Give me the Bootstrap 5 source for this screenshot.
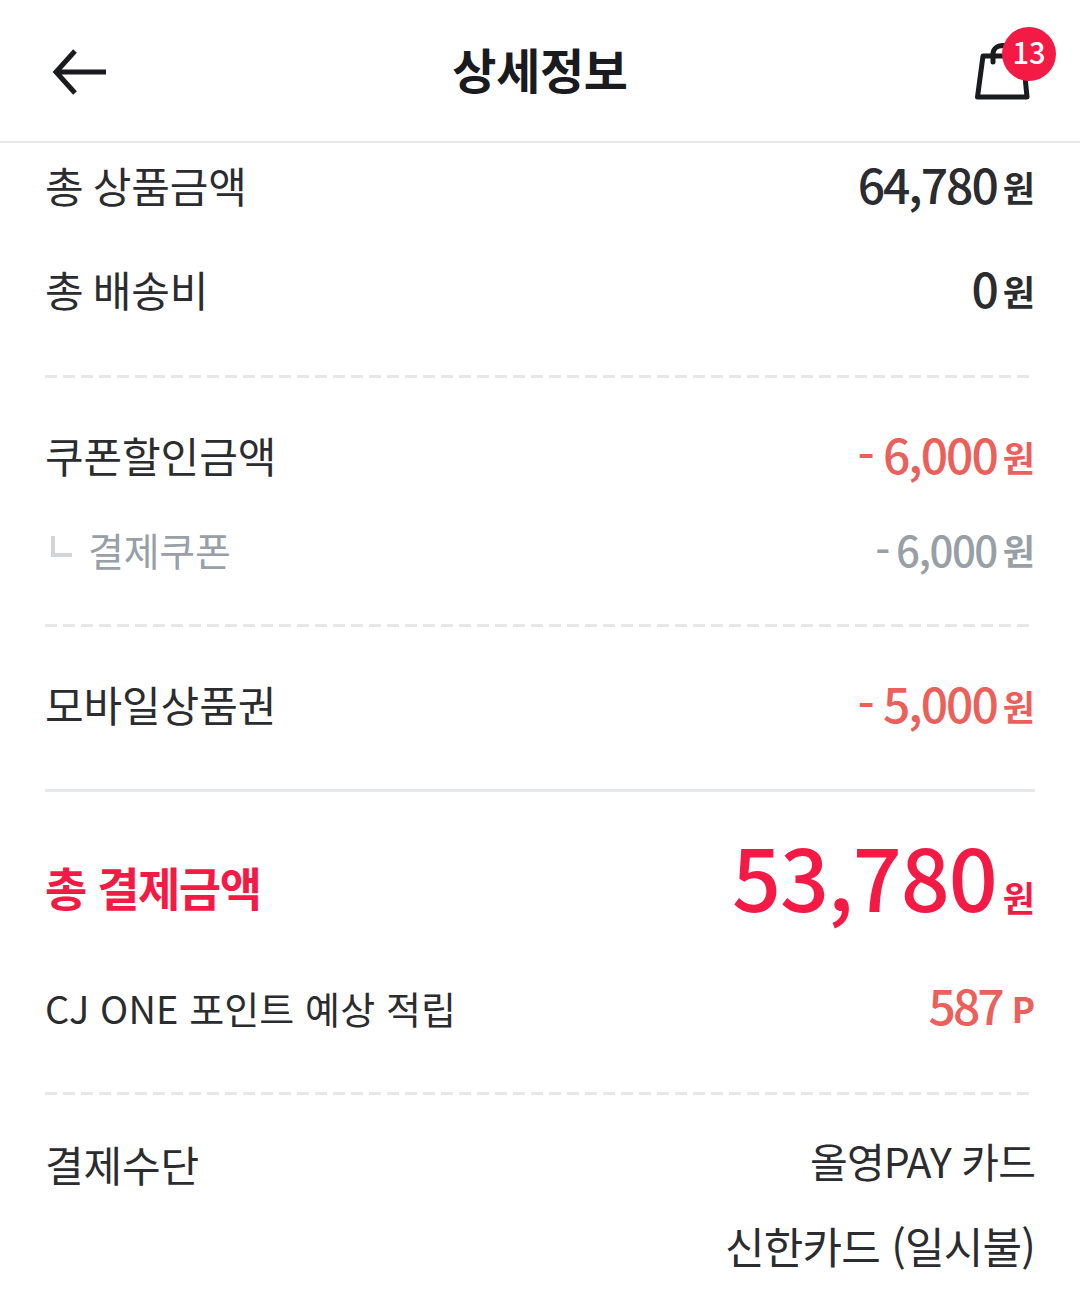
<!DOCTYPE html>
<html lang="ko">
<head>
<meta charset="UTF-8" />
<meta name="viewport" content="width=device-width, initial-scale=1" />
<title>상세정보</title>
<link href="https://cdn.jsdelivr.net/npm/bootstrap@5.3.2/dist/css/bootstrap.min.css" rel="stylesheet" />
<style>
  html, body { height: 1316px; overflow: hidden; }
  body { font-family: "Noto Sans CJK KR", "Noto Sans", sans-serif; color: #2b2c30; background: #fff; }
  .top-bar { height: 143px; border-bottom: 2px solid #e6e7e9; padding: 0 24px 0 52px; }
  .top-arrow { margin-top: 2px; }
  .top-title { font-size: 48px; font-weight: 700; color: #1a1b1f; letter-spacing: -0.3px; line-height: 1; margin-top: -6px; }
  .bag-wrap { width: 82px; height: 82px; position: relative; margin-top: -6px; }
  .bag-count { position: absolute; right: 0; top: 0; width: 54px; height: 54px; border-radius: 50%; background: #f31b45; color: #fff; font-size: 29px; font-weight: 500; line-height: 48px; text-align: center; }
  .detail-list { padding: 0 45px; margin-top: -2px; }
  .line-row { font-size: 42px; letter-spacing: -0.1px; line-height: 1.2; }
  .label-tight { word-spacing: -2.5px; }
  .amt { font-size: 48px; font-weight: 500; letter-spacing: -2px; word-spacing: -1px; line-height: 1; }
  .amt-small { font-size: 42px; font-weight: 500; letter-spacing: -1.5px; word-spacing: -3px; line-height: 1; }
  .amt-point { letter-spacing: -3px; }
  .won { font-size: 35px; font-weight: 700; letter-spacing: 0; margin-left: 6px; vertical-align: 2px; }
  .won-total { vertical-align: baseline; }
  .won-p { margin-left: 10px; }
  .r-h76 { height: 76px; }
  .r-h84 { height: 84px; }
  .r-h88 { height: 88px; }
  .r-h104 { height: 104px; }
  .r-h120 { height: 120px; }
  .dash-line { height: 3px; margin-right: 5px; background: repeating-linear-gradient(90deg, #e6e7e9 0 12px, transparent 12px 18px); }
  .gap-25 { margin-top: 25px; }
  .gap-26 { margin-top: 26px; }
  .gap-33 { margin-top: 33px; }
  .gap-48 { margin-top: 48px; }
  .solid-line { height: 3px; background: #e6e7e9; }
  .tone-red { color: #ec605b; }
  .tone-gray { color: #989fa6; }
  .tone-hot { color: #f31b45; }
  .corner-mark { width: 21px; height: 21px; border-left: 4px solid #d2d4d6; border-bottom: 4px solid #d2d4d6; margin: 0 16px 4px 6px; }
  .sub-label { font-size: 39px; letter-spacing: -0.2px; }
  .cj-label { font-size: 38px; letter-spacing: 0.1px; margin-top: 4px; }
  .total-row { height: 176px; padding-top: 40px; }
  .total-label { font-size: 46px; font-weight: 700; letter-spacing: -1.5px; margin-top: 20px; }
  .total-amt { font-size: 86px; font-weight: 500; line-height: 1; letter-spacing: -1px; }
  .pay-row { margin-top: 23px; }
  .pay-label { line-height: 85px; margin-top: 3px; }
  .pay-first { font-size: 41px; letter-spacing: -0.9px; line-height: 85px; }
  .pay-second { font-size: 43px; letter-spacing: -0.8px; line-height: 85px; }
</style>
</head>
<body>

<header class="top-bar d-flex align-items-center justify-content-between">
  <svg class="top-arrow" width="54" height="46" viewBox="0 0 54 46" fill="none" stroke="#1a1b1f" stroke-width="5">
    <path d="M54 23H4M23 2 4 23 23 44" />
  </svg>
  <div class="top-title">상세정보</div>
  <div class="bag-wrap">
    <svg width="82" height="82" viewBox="0 0 82 82" fill="none" stroke="#1a1b1f" stroke-width="5" stroke-linejoin="round" stroke-linecap="round">
      <path d="M9 29H49L53 70H3.500Z" />
      <path d="M19 35V27C19 22 23 18.500 29 18.500H34" />
    </svg>
    <span class="bag-count">13</span>
  </div>
</header>

<main class="detail-list">
  <div class="line-row d-flex justify-content-between align-items-center r-h88">
    <span class="label-tight">총 상품금액</span>
    <span><span class="amt">64,780</span><span class="won">원</span></span>
  </div>
  <div class="line-row d-flex justify-content-between align-items-center r-h120">
    <span class="label-tight">총 배송비</span>
    <span><span class="amt">0</span><span class="won">원</span></span>
  </div>
  <div class="dash-line gap-26"></div>
  <div class="line-row d-flex justify-content-between align-items-center r-h104 gap-25">
    <span>쿠폰할인금액</span>
    <span class="tone-red"><span class="amt">- 6,000</span><span class="won">원</span></span>
  </div>
  <div class="line-row d-flex justify-content-between align-items-center r-h84 tone-gray">
    <span class="d-flex align-items-center sub-label"><i class="corner-mark"></i>결제쿠폰</span>
    <span><span class="amt-small">- 6,000</span><span class="won">원</span></span>
  </div>
  <div class="dash-line gap-33"></div>
  <div class="line-row d-flex justify-content-between align-items-center r-h104 gap-25">
    <span>모바일상품권</span>
    <span class="tone-red"><span class="amt">- 5,000</span><span class="won">원</span></span>
  </div>
  <div class="solid-line gap-33"></div>
  <div class="d-flex justify-content-between align-items-start tone-hot total-row">
    <span class="total-label">총 결제금액</span>
    <span><span class="total-amt">53,780</span><span class="won won-total">원</span></span>
  </div>
  <div class="line-row d-flex justify-content-between align-items-center r-h76">
    <span class="cj-label">CJ ONE 포인트 예상 적립</span>
    <span class="tone-red"><span class="amt amt-point">587</span><span class="won won-p">P</span></span>
  </div>
  <div class="dash-line gap-48"></div>
  <div class="d-flex justify-content-between line-row pay-row">
    <span class="pay-label">결제수단</span>
    <div class="text-end">
      <div class="pay-first">올영PAY 카드</div>
      <div class="pay-second">신한카드 (일시불)</div>
    </div>
  </div>
</main>

</body>
</html>
